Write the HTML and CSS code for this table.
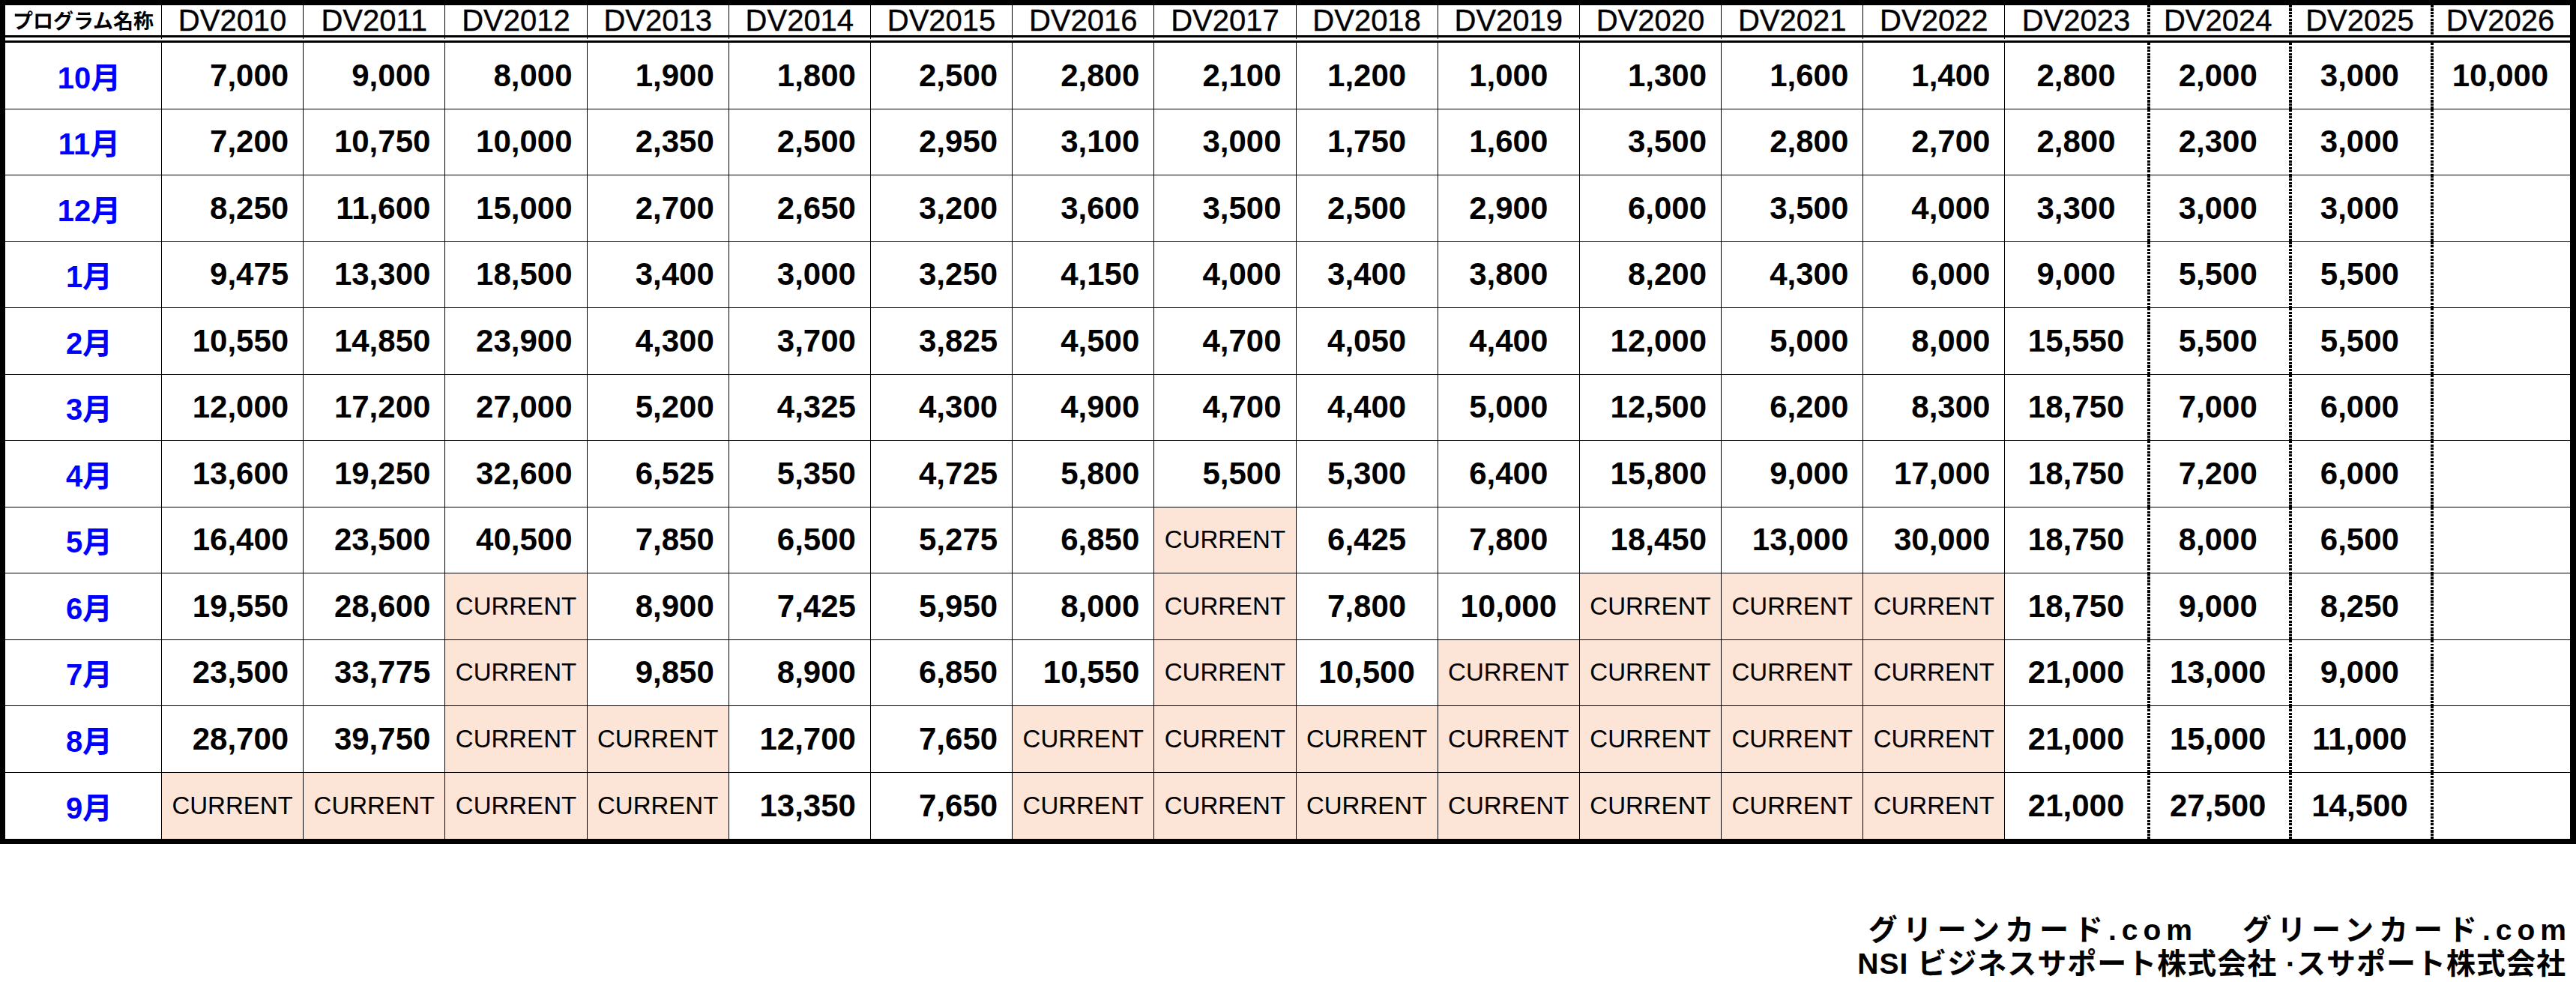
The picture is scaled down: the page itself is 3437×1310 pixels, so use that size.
FILE: index.html
```html
<!DOCTYPE html>
<html lang="ja">
<head>
<meta charset="utf-8">
<title>DV 当選番号推移</title>
<link rel="stylesheet" href="styles.css">
</head>
<body>
<table class="grid">
  <colgroup>
    <col class="c-month">
    <col class="c-dv"><col class="c-dv"><col class="c-dv"><col class="c-dv">
    <col class="c-dv"><col class="c-dv"><col class="c-dv"><col class="c-dv">
    <col class="c-dv"><col class="c-dv"><col class="c-dv"><col class="c-dv">
    <col class="c-dv"><col class="c-dv"><col class="c-dv"><col class="c-dv">
    <col class="c-last">
  </colgroup>
  <thead>
    <tr>
      <th class="name">プログラム名称</th>
      <th>DV2010</th><th>DV2011</th><th>DV2012</th><th>DV2013</th><th>DV2014</th><th>DV2015</th>
      <th>DV2016</th><th>DV2017</th><th>DV2018</th><th>DV2019</th><th>DV2020</th><th>DV2021</th>
      <th>DV2022</th><th>DV2023</th><th>DV2024</th><th>DV2025</th><th>DV2026</th>
    </tr>
  </thead>
  <tbody>
    <tr><td>10月</td><td>7,000</td><td>9,000</td><td>8,000</td><td>1,900</td><td>1,800</td><td>2,500</td><td>2,800</td><td>2,100</td><td>1,200</td><td>1,000</td><td>1,300</td><td>1,600</td><td>1,400</td><td>2,800</td><td>2,000</td><td>3,000</td><td>10,000</td></tr>
    <tr><td>11月</td><td>7,200</td><td>10,750</td><td>10,000</td><td>2,350</td><td>2,500</td><td>2,950</td><td>3,100</td><td>3,000</td><td>1,750</td><td>1,600</td><td>3,500</td><td>2,800</td><td>2,700</td><td>2,800</td><td>2,300</td><td>3,000</td><td></td></tr>
    <tr><td>12月</td><td>8,250</td><td>11,600</td><td>15,000</td><td>2,700</td><td>2,650</td><td>3,200</td><td>3,600</td><td>3,500</td><td>2,500</td><td>2,900</td><td>6,000</td><td>3,500</td><td>4,000</td><td>3,300</td><td>3,000</td><td>3,000</td><td></td></tr>
    <tr><td>1月</td><td>9,475</td><td>13,300</td><td>18,500</td><td>3,400</td><td>3,000</td><td>3,250</td><td>4,150</td><td>4,000</td><td>3,400</td><td>3,800</td><td>8,200</td><td>4,300</td><td>6,000</td><td>9,000</td><td>5,500</td><td>5,500</td><td></td></tr>
    <tr><td>2月</td><td>10,550</td><td>14,850</td><td>23,900</td><td>4,300</td><td>3,700</td><td>3,825</td><td>4,500</td><td>4,700</td><td>4,050</td><td>4,400</td><td>12,000</td><td>5,000</td><td>8,000</td><td>15,550</td><td>5,500</td><td>5,500</td><td></td></tr>
    <tr><td>3月</td><td>12,000</td><td>17,200</td><td>27,000</td><td>5,200</td><td>4,325</td><td>4,300</td><td>4,900</td><td>4,700</td><td>4,400</td><td>5,000</td><td>12,500</td><td>6,200</td><td>8,300</td><td>18,750</td><td>7,000</td><td>6,000</td><td></td></tr>
    <tr><td>4月</td><td>13,600</td><td>19,250</td><td>32,600</td><td>6,525</td><td>5,350</td><td>4,725</td><td>5,800</td><td>5,500</td><td>5,300</td><td>6,400</td><td>15,800</td><td>9,000</td><td>17,000</td><td>18,750</td><td>7,200</td><td>6,000</td><td></td></tr>
    <tr><td>5月</td><td>16,400</td><td>23,500</td><td>40,500</td><td>7,850</td><td>6,500</td><td>5,275</td><td>6,850</td><td class="cur">CURRENT</td><td>6,425</td><td>7,800</td><td>18,450</td><td>13,000</td><td>30,000</td><td>18,750</td><td>8,000</td><td>6,500</td><td></td></tr>
    <tr><td>6月</td><td>19,550</td><td>28,600</td><td class="cur">CURRENT</td><td>8,900</td><td>7,425</td><td>5,950</td><td>8,000</td><td class="cur">CURRENT</td><td>7,800</td><td>10,000</td><td class="cur">CURRENT</td><td class="cur">CURRENT</td><td class="cur">CURRENT</td><td>18,750</td><td>9,000</td><td>8,250</td><td></td></tr>
    <tr><td>7月</td><td>23,500</td><td>33,775</td><td class="cur">CURRENT</td><td>9,850</td><td>8,900</td><td>6,850</td><td>10,550</td><td class="cur">CURRENT</td><td>10,500</td><td class="cur">CURRENT</td><td class="cur">CURRENT</td><td class="cur">CURRENT</td><td class="cur">CURRENT</td><td>21,000</td><td>13,000</td><td>9,000</td><td></td></tr>
    <tr><td>8月</td><td>28,700</td><td>39,750</td><td class="cur">CURRENT</td><td class="cur">CURRENT</td><td>12,700</td><td>7,650</td><td class="cur">CURRENT</td><td class="cur">CURRENT</td><td class="cur">CURRENT</td><td class="cur">CURRENT</td><td class="cur">CURRENT</td><td class="cur">CURRENT</td><td class="cur">CURRENT</td><td>21,000</td><td>15,000</td><td>11,000</td><td></td></tr>
    <tr><td>9月</td><td class="cur">CURRENT</td><td class="cur">CURRENT</td><td class="cur">CURRENT</td><td class="cur">CURRENT</td><td>13,350</td><td>7,650</td><td class="cur">CURRENT</td><td class="cur">CURRENT</td><td class="cur">CURRENT</td><td class="cur">CURRENT</td><td class="cur">CURRENT</td><td class="cur">CURRENT</td><td class="cur">CURRENT</td><td>21,000</td><td>27,500</td><td>14,500</td><td></td></tr>
  </tbody>
</table>
<div class="footer">
  <div class="footer-line wide"><span>グリーンカード.com</span><span class="gap"></span><span>グリーンカード.com</span></div>
  <div class="footer-line">NSI ビジネスサポート株式会社 ·スサポート株式会社</div>
</div>
</body>
</html>
```

FILE: styles.css
```css
html, body {
  margin: 0;
  padding: 0;
  background: #ffffff;
}

body {
  width: 3437px;
  height: 1310px;
  overflow: hidden;
  font-family: "Liberation Sans", "Noto Sans CJK JP", sans-serif;
  color: #000;
}

.grid {
  width: 3437px;
  table-layout: fixed;
  border-collapse: separate;
  border-spacing: 0;
  border-style: solid;
  border-color: #000;
  border-width: 7px 8px 7px 7px;
}

.c-month { width: 209px; }
.c-dv { width: 189.2px; }
.c-last { width: 185.8px; }

.grid th {
  height: 40px;
  padding: 0;
  font-family: "Liberation Sans", "Noto Sans CJK JP", sans-serif;
  font-weight: 400;
  font-size: 40px;
  line-height: 40px;
  text-align: center;
  white-space: nowrap;
  border-right: 1px solid #000;
  border-bottom: 10px double #000;
  -webkit-text-stroke: 0.4px #000;
}

.grid th.name {
  font-family: "Noto Sans CJK JP", sans-serif;
  font-weight: 700;
  font-size: 27px;
  -webkit-text-stroke: 0;
}

.grid tbody tr {
  height: 88.5px;
}

.grid td {
  padding: 0 19px 0 0;
  font-family: "Liberation Sans", sans-serif;
  font-weight: 700;
  font-size: 42px;
  text-align: right;
  white-space: nowrap;
  border-right: 1px solid #000;
  border-bottom: 1px solid #000;
  overflow: hidden;
}

.grid tbody tr:last-child td {
  border-bottom: none;
}

.grid tr > :last-child {
  border-right: none;
}

/* month labels */
.grid td:first-child {
  padding: 0 0 0 16px;
  text-align: center;
  color: #0000ff;
  font-family: "Liberation Sans", "Noto Sans CJK JP", sans-serif;
  font-size: 40px;
}

/* centered columns: DV2018, DV2019, DV2023-DV2026 */
.grid td:nth-child(10),
.grid td:nth-child(11),
.grid td:nth-child(n+15) {
  padding: 0;
  text-align: center;
}

/* dotted separators between DV2023 | DV2024 | DV2025 | DV2026 */
.grid tr > :nth-child(15),
.grid tr > :nth-child(16),
.grid tr > :nth-child(17) {
  border-right: none;
}

.grid tr > :nth-child(n+16) {
  background-image: repeating-linear-gradient(to bottom, #000 0 3px, transparent 3px 4.5px);
  background-size: 4px 100%;
  background-repeat: no-repeat;
  background-position: left top;
}

.grid td.cur {
  padding: 0;
  text-align: center;
  background-color: #fce4d6;
  font-family: "Liberation Sans", sans-serif;
  font-weight: 400;
  font-size: 33px;
}

.footer {
  margin-top: 92px;
  padding-right: 13px;
  display: flex;
  flex-direction: column;
  align-items: flex-end;
  font-family: "Liberation Sans", "Noto Sans CJK JP", sans-serif;
  font-weight: 700;
  font-size: 39px;
  line-height: 45px;
}

.footer-line {
  white-space: nowrap;
  letter-spacing: 1px;
}

.footer-line.wide {
  display: flex;
  letter-spacing: 7px;
}

.footer-line.wide span:last-child {
  margin-right: -7px;
}

.footer-line .gap {
  width: 60px;
}
```
